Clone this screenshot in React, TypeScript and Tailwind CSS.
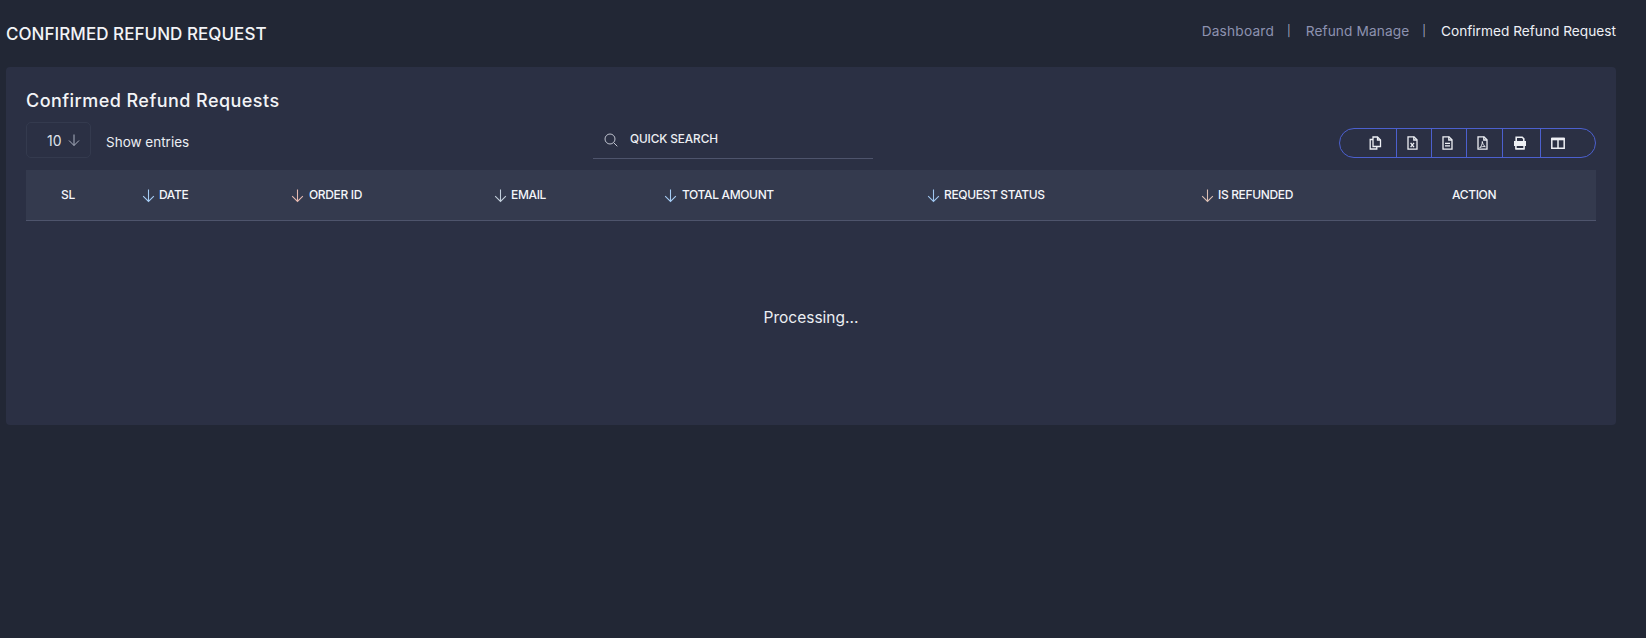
const Arrow = ({ className = '' }: { className?: string }) => (
  <svg viewBox="0 0 14 14" className={`shrink-0 ${className}`} fill="none" stroke="currentColor" strokeWidth="1">
    <path d="M7 1.5v11M2 7.5 7 12.5l5-5" />
  </svg>
);

const columns = [
  { label: 'SL' },
  { label: 'DATE', arrow: 'text-[#a6cdf5]', gap: 'gap-[3px]' },
  { label: 'ORDER ID', arrow: 'text-[#e6b9b0]', gap: 'gap-[4px]' },
  { label: 'EMAIL', arrow: 'text-[#c3cfdc]', gap: 'gap-[3px]' },
  { label: 'TOTAL AMOUNT', arrow: 'text-[#a6cdf5]', gap: 'gap-[4px]' },
  { label: 'REQUEST STATUS', arrow: 'text-[#9fc6f0]', gap: 'gap-[3px]' },
  { label: 'IS REFUNDED', arrow: 'text-[#dcbfb4]', gap: 'gap-[3px]' },
  { label: 'ACTION' },
];

const CopyIcon = () => (
  <svg viewBox="0 0 13 14" className="w-[13px] h-[14px]" fill="none" stroke="currentColor" strokeWidth="1.3">
    <path d="M4 1h4.5L11.5 4v6.5H4zM4 3.5H1.2V13h6.6v-2.5" />
    <path d="M8.5 1v3h3" />
  </svg>
);

const FileShell = ({ children }: { children: React.ReactNode }) => (
  <svg viewBox="0 0 11 14" className="w-[11px] h-[14px]" fill="none" stroke="currentColor" strokeWidth="1.3">
    <path d="M1 .8h6l3 3v9.4H1z" />
    <path d="M6.8.8V4h3.2" />
    {children}
  </svg>
);

const PrintIcon = () => (
  <svg viewBox="0 0 14 14" className="w-[14px] h-[14px]" fill="none" stroke="currentColor" strokeWidth="1.6">
    <path d="M3.2 5V1.2h6l1.6 1.6V5M3.2 9.5V12.8h7.6V9.5z" />
    <path d="M1 5h12v5H1z" fill="currentColor" stroke="none" />
    <path d="M3 9.2h8v3.6H3z" fill="#2b3044" stroke="currentColor" strokeWidth="1.4" />
  </svg>
);

const ColumnsIcon = () => (
  <svg viewBox="0 0 14 12" className="w-[14px] h-[12px]" fill="none" stroke="currentColor" strokeWidth="1.5">
    <path d="M.8 1.5h12.4v9.7H.8zM7 2v9.3" />
    <path d="M.8 1h12.4v2H.8z" fill="currentColor" strokeWidth="0.6" />
  </svg>
);

const tools = [
  { w: 'w-[57px] pl-[29px] justify-start', icon: <CopyIcon /> },
  { w: 'w-[35px] justify-center pr-[3px]', icon: <FileShell><path d="M3.6 6.8l3.4 4.4M7 6.8l-3.4 4.4" /></FileShell> },
  { w: 'w-[35px] justify-center pr-[3px]', icon: <FileShell><path d="M3 7.4h5M3 9.8h5" /></FileShell> },
  { w: 'w-[36px] justify-center pr-[4px]', icon: <FileShell><path d="M5.3 5.5c0 3-1 4.8-2.6 6.2 2-1.2 3.8-1.4 5.6-1-1.6-1-2.6-2.8-3-5.2z" strokeWidth="0.9" /></FileShell> },
  { w: 'w-[38px] justify-center pr-[3px]', icon: <PrintIcon /> },
  { w: 'flex-1 pl-[10px] justify-start', icon: <ColumnsIcon /> },
];

export default function App() {
  return (
    <div className="min-h-screen bg-[#222735] font-['Inter',sans-serif] text-white">
      <div className="flex items-center justify-between h-[67px] pt-[2px] pl-[6px] pr-[30px]">
        <h1 className="text-[17px] font-medium tracking-[0.05px] text-[#f3f4f7]">CONFIRMED REFUND REQUEST</h1>
        <nav className="flex items-center text-[13.7px] -mt-[7px]">
          <span className="text-[#8d92b0] tracking-[0.2px]">Dashboard</span>
          <span className="text-[#a4a9c2] ml-[13px] mr-[15px] text-[11px]">|</span>
          <span className="text-[#8d92b0] tracking-[0.1px]">Refund Manage</span>
          <span className="text-[#a4a9c2] ml-[13px] mr-[15px] text-[11px]">|</span>
          <span className="text-[#eef0f5]">Confirmed Refund Request</span>
        </nav>
      </div>

      <div className="ml-[6px] mr-[30px] h-[358px] rounded-[4px] bg-[#2b3044] px-[20px] pt-[22px]">
        <h2 className="text-[18px] font-medium leading-[24px] tracking-[0.45px] text-[#f3f4f7]">Confirmed Refund Requests</h2>

        <div className="flex h-[48px] items-start mt-[9px]">
          <div className="flex items-center justify-between w-[65px] h-[36px] rounded-[5px] border border-[#343a4e] pl-[20px] pr-[9px] text-[14px] text-[#dfe2ea]">
            <span>10</span>
            <Arrow className="w-[14px] h-[14px] text-[#aab0c0]" />
          </div>
          <span className="ml-[15px] mt-[10px] w-[83px] whitespace-nowrap text-[13.5px] text-[#eceef3]">Show entries</span>

          <div className="ml-[404px] w-[280px] h-[37px] border-b border-[#4e546c] flex items-center pl-[11px] pb-[1px] gap-[12px]">
            <svg viewBox="0 0 14 14" className="w-[14px] h-[14px] text-[#bfc3cf]" fill="none" stroke="currentColor" strokeWidth="1">
              <circle cx="6" cy="6" r="5" />
              <path d="M9.7 9.7 13.3 13.3" />
            </svg>
            <span className="text-[11.8px] font-medium tracking-[-0.1px] text-[#eceef3]">QUICK SEARCH</span>
          </div>

          <div className="ml-auto mt-[6px] flex w-[257px] h-[30px] rounded-full border border-[#4c60cf] overflow-hidden">
            {tools.map((t, i) => (
              <div key={i} className={`flex items-center text-[#eef0f5] ${t.w} ${i < tools.length - 1 ? 'border-r border-[#4c60cf]' : ''}`}>
                {t.icon}
              </div>
            ))}
          </div>
        </div>

        <div className="grid grid-cols-[117px_149px_203px_170px_263px_274px_250px_144px] h-[51px] items-center bg-[#343a4e] border-b border-[#4e546c]">
          {columns.map((c, i) => (
            <div key={c.label} className={`flex items-center text-[12px] font-medium tracking-[-0.35px] text-[#f3f5f9] ${c.gap ?? ''} ${i === 0 ? 'pl-[35px]' : ''}`}>
              {c.arrow && <Arrow className={`-ml-[2px] w-[15px] h-[15px] ${c.arrow}`} />}
              <span>{c.label}</span>
            </div>
          ))}
        </div>

        <div className="flex justify-center pt-[85px] text-[15.5px] text-[#eceef3]">Processing...</div>
      </div>
    </div>
  );
}
